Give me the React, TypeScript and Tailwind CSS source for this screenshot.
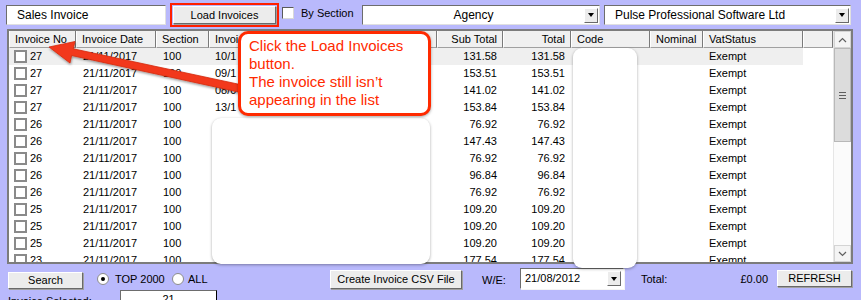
const font = "font-['Liberation_Sans',Arial,sans-serif]";

const cols = [
  { label: "Invoice No", w: "w-[67px]" },
  { label: "Invoice Date", w: "w-[80px]" },
  { label: "Section", w: "w-[53px]" },
  { label: "Invoice Ref", w: "w-[111px]" },
  { label: "Customer", w: "w-[117px]" },
  { label: "Sub Total", w: "w-[66px]", right: true },
  { label: "Total", w: "w-[68px]", right: true },
  { label: "Code", w: "w-[79px]" },
  { label: "Nominal", w: "w-[53px]" },
  { label: "VatStatus", w: "w-[100px]" },
];

const rows = [
  { no: "27", ref: "10/1", sub: "131.58" },
  { no: "27", ref: "09/1", sub: "153.51" },
  { no: "27", ref: "08/0", sub: "141.02" },
  { no: "27", ref: "13/1", sub: "153.84" },
  { no: "26", ref: "", sub: "76.92" },
  { no: "26", ref: "", sub: "147.43" },
  { no: "26", ref: "", sub: "76.92" },
  { no: "26", ref: "", sub: "96.84" },
  { no: "26", ref: "", sub: "76.92" },
  { no: "25", ref: "", sub: "109.20" },
  { no: "25", ref: "", sub: "109.20" },
  { no: "25", ref: "", sub: "109.20" },
  { no: "23", ref: "", sub: "177.54" },
];

function WinButton({ label, className }: { label: string; className: string }) {
  return (
    <div
      className={[
        "flex shrink-0 items-center justify-center whitespace-nowrap border border-t-white border-l-white border-r-[#696969] border-b-[#696969] bg-[#ececec] text-[11px] text-black shadow-[1px_1px_0_#a0a0a0]",
        className,
      ].join(" ")}
    >
      {label}
    </div>
  );
}

function DropButton() {
  return (
    <div className="flex h-[15px] w-[14px] shrink-0 items-center justify-center border border-t-white border-l-white border-r-[#696969] border-b-[#696969] bg-[#ececec]">
      <div className="h-0 w-0 border-x-[3.5px] border-t-[4px] border-x-transparent border-t-black" />
    </div>
  );
}

function Chevron({ up }: { up?: boolean }) {
  return (
    <svg width="9" height="6" viewBox="0 0 9 6">
      <path
        d={up ? "M1 5 L4.5 1.5 L8 5" : "M1 1 L4.5 4.5 L8 1"}
        fill="none"
        stroke="#606060"
        strokeWidth="1.2"
      />
    </svg>
  );
}

export default function App() {
  return (
    <div className={`relative h-[300px] w-[861px] overflow-hidden bg-[#b9b9fc] text-[11px] text-black ${font}`}>
      {/* top bar */}
      <div className="box-content flex h-[24px] items-center pt-[3px]">
        <div className="ml-[6px] flex h-[20px] w-[160px] shrink-0 items-center border border-t-[#6d6d6d] border-l-[#6d6d6d] border-r-[#e0e0e0] border-b-[#e0e0e0] bg-white pl-[10px] text-[12px]">
          Sales Invoice
        </div>
        <div className="ml-[4px] h-[24px] w-[109px] shrink-0 border-2 border-[#ff1f00] p-px">
          <WinButton label="Load Invoices" className="h-[18px] w-[103px]" />
        </div>
        <div className="ml-[3px] mt-[4px] h-[12px] w-[12px] shrink-0 self-start border border-t-[#5a5a5a] border-l-[#5a5a5a] border-r-[#d8d8d8] border-b-[#d8d8d8] bg-white" />
        <div className="ml-[7px] -mt-[3px] w-[61px] shrink-0 whitespace-nowrap">By Section</div>
        <div className="flex h-[20px] w-[238px] shrink-0 items-center border border-t-[#6d6d6d] border-l-[#6d6d6d] border-r-[#e0e0e0] border-b-[#e0e0e0] bg-white pr-[1px] text-[12px]">
          <div className="flex-1 text-center">Agency</div>
          <DropButton />
        </div>
        <div className="ml-[4px] flex h-[20px] w-[247px] shrink-0 items-center border border-t-[#6d6d6d] border-l-[#6d6d6d] border-r-[#e0e0e0] border-b-[#e0e0e0] bg-white pl-[10px] pr-[1px] text-[12px]">
          <div className="flex-1 whitespace-nowrap">Pulse Professional Software Ltd</div>
          <DropButton />
        </div>
      </div>

      {/* grid */}
      <div className="ml-[7px] mt-[2px] flex h-[235px] w-[846px] border-2 border-[#7c7c7c] bg-white">
        <div className="flex w-[824px] flex-col overflow-hidden">
          <div className="flex h-[17px] shrink-0">
            {cols.map((c) => (
              <div
                key={c.label}
                className={[
                  "flex h-[17px] shrink-0 items-center overflow-hidden whitespace-nowrap border-b border-l border-r border-l-white border-r-[#7a7a7a] border-b-[#a0a0a0] bg-[#f0f0f0] px-[5px]",
                  c.w,
                  c.right ? "justify-end" : "",
                ].join(" ")}
              >
                {c.label}
              </div>
            ))}
            <div className="h-[17px] w-[30px] shrink-0 border-b border-l border-r border-l-white border-r-[#7a7a7a] border-b-[#a0a0a0] bg-[#f0f0f0]" />
          </div>
          {rows.map((r, i) => (
            <div key={i} className={`flex h-[17px] w-[794px] shrink-0 items-center ${i === 0 ? "bg-[#efefef]" : ""}`}>
              <div className="flex w-[67px] shrink-0 items-center pl-[5px]">
                <div className="h-[13px] w-[13px] shrink-0 border-2 border-[#8a8a8a] bg-white" />
                <span className="ml-[3px]">{r.no}</span>
              </div>
              <div className="w-[80px] shrink-0 pl-[7px]">21/11/2017</div>
              <div className="w-[53px] shrink-0 pl-[7px]">100</div>
              <div className="w-[111px] shrink-0 pl-[6px]">{r.ref}</div>
              <div className="w-[117px] shrink-0" />
              <div className="w-[66px] shrink-0 pr-[6px] text-right">{r.sub}</div>
              <div className="w-[68px] shrink-0 pr-[6px] text-right">{r.sub}</div>
              <div className="w-[79px] shrink-0" />
              <div className="w-[53px] shrink-0" />
              <div className="w-[100px] shrink-0 pl-[6px]">Exempt</div>
            </div>
          ))}
        </div>
        {/* scrollbar */}
        <div className="flex w-[18px] shrink-0 flex-col border-l border-[#e6e6e6] bg-[#fbfbfb]">
          <div className="flex h-[17px] items-center justify-center border border-[#d4d4d4] bg-[#f4f4f4]">
            <Chevron up />
          </div>
          <div className="flex h-[94px] flex-col items-center justify-center gap-[2px] border border-[#b8b8b8] bg-[#dcdcdc]">
            <div className="h-px w-[7px] bg-[#5e5e5e]" />
            <div className="h-px w-[7px] bg-[#5e5e5e]" />
            <div className="h-px w-[7px] bg-[#5e5e5e]" />
          </div>
          <div className="flex-1" />
          <div className="flex h-[17px] items-center justify-center border border-[#d4d4d4] bg-[#f4f4f4]">
            <Chevron />
          </div>
        </div>
      </div>

      {/* bottom bar */}
      <div className="box-content flex h-[22px] items-start whitespace-nowrap pt-[4px]">
        <div className="flex w-[330px] shrink-0 items-start">
          <WinButton label="Search" className="ml-[8px] mt-[4px] h-[17px] w-[75px]" />
          <div className="ml-[14px] mt-[5px] flex h-[12px] w-[12px] shrink-0 items-center justify-center rounded-full border border-[#8c8c8c] bg-white">
            <div className="h-[4px] w-[4px] rounded-full bg-black" />
          </div>
          <div className="ml-[6px] mt-[4px] w-[57px] shrink-0 leading-[14px]">TOP 2000</div>
          <div className="mt-[5px] h-[12px] w-[12px] shrink-0 rounded-full border border-[#8c8c8c] bg-white" />
          <div className="ml-[4px] mt-[4px] leading-[14px]">ALL</div>
        </div>
        <WinButton label="Create Invoice CSV File" className="mt-[2px] h-[19px] w-[132px]" />
        <div className="ml-[20px] mt-[5px] w-[38px] shrink-0 leading-[14px]">W/E:</div>
        <div className="flex h-[21px] w-[104px] shrink-0 items-center border border-t-[#6d6d6d] border-l-[#6d6d6d] border-r-white border-b-white bg-white pl-[4px] pr-[2px] shadow-[1px_1px_0_#f4f4f4]">
          <div className="flex-1">21/08/2012</div>
          <DropButton />
        </div>
        <div className="ml-[17px] mt-[5px] shrink-0 leading-[13px]">Total:</div>
        <div className="mt-[5px] flex-1 pr-[9px] text-right leading-[13px]">£0.00</div>
        <WinButton label="REFRESH" className="mr-[9px] mt-[2px] h-[17px] w-[75px]" />
      </div>
      <div className="flex items-start whitespace-nowrap">
        <div className="ml-[8px] mt-[3px] w-[112px] shrink-0">Invoice Selected:</div>
        <div className="h-[18px] w-[97px] shrink-0 border border-t-[#6d6d6d] border-l-[#6d6d6d] bg-white text-center">21</div>
      </div>

      {/* redaction boxes */}
      <div className="absolute left-[212px] top-[118px] h-[146px] w-[218px] rounded-[9px] bg-white shadow-[0_1px_3px_rgba(0,0,0,0.35)]" />
      <div className="absolute left-[573px] top-[48px] h-[220px] w-[64px] rounded-[9px] bg-white shadow-[0_1px_3px_rgba(0,0,0,0.35)]" />

      {/* arrow */}
      <svg className="pointer-events-none absolute left-0 top-0" width="861" height="300">
        <defs>
          <filter id="sh" x="-10%" y="-30%" width="130%" height="180%">
            <feDropShadow dx="0.5" dy="1.5" stdDeviation="1.2" floodColor="#000" floodOpacity="0.4" />
          </filter>
        </defs>
        <polygon
          points="49,47 75,41.5 73.3,48.8 240,84.5 238.5,92 71.6,55.5 70,63"
          fill="#f2391a"
          stroke="#d42a10"
          strokeWidth="0.8"
          strokeLinejoin="round"
          filter="url(#sh)"
        />
      </svg>

      {/* callout */}
      <div className="absolute left-[238px] top-[31px] h-[85px] w-[193px] rounded-[10px] border-[3px] border-[#ff2a00] bg-white pl-[8px] pt-[3px] text-[15px] leading-[18px] text-[#ff2a00] shadow-[0_1px_3px_rgba(0,0,0,0.35)]">
        <div>Click the Load Invoices</div>
        <div>button.</div>
        <div>The invoice still isn’t</div>
        <div>appearing in the list</div>
      </div>
    </div>
  );
}
